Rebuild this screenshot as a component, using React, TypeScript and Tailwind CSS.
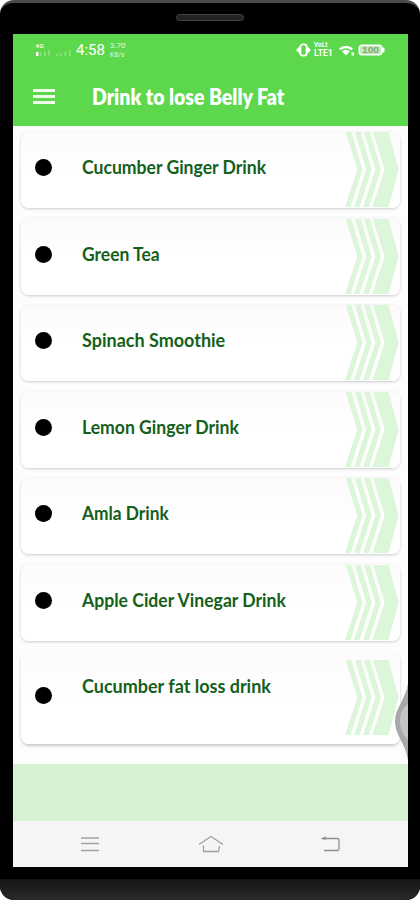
import React from 'react';

type Drink = {
  id: string;
  title: string;
  // width the title is condensed to, keeps the narrow look
  fit: string;
  tall?: boolean;
};

const drinks: Drink[] = [
  { id: 'cucumber-ginger', title: 'Cucumber Ginger Drink', fit: 'w-[184px]' },
  { id: 'green-tea', title: 'Green Tea', fit: 'w-[78px]' },
  { id: 'spinach', title: 'Spinach Smoothie', fit: 'w-[143px]' },
  { id: 'lemon-ginger', title: 'Lemon Ginger Drink', fit: 'w-[157px]' },
  { id: 'amla', title: 'Amla Drink', fit: 'w-[87px]' },
  { id: 'apple-cider', title: 'Apple Cider Vinegar Drink', fit: 'w-[204px]' },
  { id: 'cucumber-fat-loss', title: 'Cucumber fat loss drink', fit: 'w-[189px]', tall: true },
];

// Squeezes a line of text horizontally so that it fills its box
const FitText: React.FC<{ text: string; className: string }> = ({ text, className }) => {
  const box = React.useRef<HTMLSpanElement>(null);
  const inner = React.useRef<HTMLSpanElement>(null);
  const [scale, setScale] = React.useState(1);

  React.useLayoutEffect(() => {
    if (box.current && inner.current) {
      setScale(box.current.offsetWidth / inner.current.offsetWidth);
    }
  }, [text]);

  return (
    <span ref={box} className={`block whitespace-nowrap ${className}`}>
      <span ref={inner} className="inline-block origin-left" style={{ transform: `scaleX(${scale})` }}>
        {text}
      </span>
    </span>
  );
};

const Chevrons = () => (
  <svg viewBox="0 0 55 75" className="h-[75px] w-[55px] shrink-0" fill="#dcf6da">
    <path d="M.7 0H6.3L17.6 37.5L5.7 75H0L12.3 37.5Z" />
    <path d="M10 0H15.7L26.8 37.5L14.7 75H9L21.2 37.5Z" />
    <path d="M19 0H25L36 37.5L24 75H18L30.4 37.5Z" />
    <path d="M28 0H43.5L53.7 37.5L43.5 75H27.3L39.6 37.5Z" />
  </svg>
);

const StatusBar = () => (
  <div className="flex h-8 items-center pr-[22px] pl-[22px] text-white">
    <svg viewBox="0 0 37 16" className="h-4 w-[37px]" fill="#fff">
      <text x="0.5" y="6.3" fontSize="6" fontWeight="700" fontFamily="Liberation Sans, sans-serif" textLength="8.5">4G</text>
      <rect x="1" y="10" width="2.5" height="4" />
      <g opacity=".3">
        <rect x="5" y="10" width="1.5" height="4" />
        <rect x="9" y="9" width="1.5" height="5" />
        <rect x="13" y="8" width="1.5" height="6" />
        <rect x="21" y="12" width="1.5" height="2" />
        <rect x="25" y="11" width="1.5" height="3" />
        <rect x="29.5" y="9.5" width="1.5" height="4.5" />
        <rect x="34" y="8" width="1.5" height="6" />
      </g>
    </svg>
    <FitText text="4:58" className="ml-[4px] w-[29px] font-[Roboto,sans-serif] text-[15px] leading-4" />
    <div className="ml-[5px] flex flex-col font-[Roboto,sans-serif] text-[8px] leading-[9px] opacity-80">
      <FitText text="3.70" className="w-4" />
      <FitText text="KB/s" className="w-[14px]" />
    </div>
    <svg viewBox="0 0 15 14" className="ml-auto h-[14px] w-[15px] shrink-0" fill="#fff">
      <path d="M0 7L4 3V11ZM15 7L11 3V11Z" />
      <rect x="4.4" y="1.4" width="6.2" height="11.2" rx="2.4" fill="none" stroke="#fff" strokeWidth="1.8" />
    </svg>
    <div className="ml-[3px] flex w-[19px] flex-col font-[Roboto,sans-serif] font-bold">
      <div className="text-[6.5px] leading-[7px]">
        <FitText text="VoLt" className="w-[14px]" />
      </div>
      <div className="text-[9px] leading-[9px]">
        <FitText text="LTE1" className="w-[19px]" />
      </div>
    </div>
    <svg viewBox="42 0 48 18" className="ml-[5px] h-[18px] w-12 shrink-0" fill="#fff">
      <path d="M43 7.5Q50 2 57 7.5L55.3 9.2Q50 5.2 44.7 9.2ZM46 10.2Q50 7.2 54 10.2L50 14.5Z" />
      <path d="M55.5 11h1v1.5h.8V11H58v3.5h-2.5Z" />
      <rect x="62.5" y="3.5" width="24" height="11" rx="3.5" />
      <rect x="86" y="6.5" width="2.5" height="5" rx="1" />
      <rect x="64" y="5" width="21" height="8" rx="2.2" fill="#c3e6bc" />
      <text x="66" y="12.1" fontSize="8.5" fontWeight="700" fontFamily="Liberation Sans, sans-serif" textLength="17" lengthAdjust="spacingAndGlyphs" fill="#78ac70">100</text>
    </svg>
  </div>
);

const AppBar = () => (
  <div className="flex flex-1 items-center pl-5">
    <div className="flex w-[22px] flex-col gap-[3px]">
      <div className="h-[3px] bg-[#edfbea]" />
      <div className="h-[3px] bg-[#edfbea]" />
      <div className="h-[3px] bg-[#edfbea]" />
    </div>
    <h1 className="ml-[37px] pt-px text-[22px] leading-7 font-extrabold text-white">
      <FitText text="Drink to lose Belly Fat" className="w-[192px]" />
    </h1>
  </div>
);

const DrinkCard: React.FC<{ drink: Drink }> = ({ drink }) => (
  <div
    className={`flex shrink-0 items-center overflow-hidden rounded-lg bg-linear-to-b from-[#fdfafb] to-white to-50% pl-[14px] ${
      drink.tall ? 'h-[93.5px] shadow-[0_2px_3px_rgba(0,0,0,0.2)]' : 'h-[76.5px] shadow-[0_1px_3px_rgba(0,0,0,0.2)]'
    }`}
  >
    <div className="mb-1 size-[17px] rounded-full bg-black" />
    <div className="ml-[30px] self-start pt-[22.5px] text-[19.5px] leading-[26px] font-bold text-[#14601b]">
      <FitText text={drink.title} className={drink.fit} />
    </div>
    <div className="ml-auto">
      <Chevrons />
    </div>
  </div>
);

const NavBar = () => (
  <div className="flex h-[46px] shrink-0 items-center bg-[#f5f5f5] pl-[68px]">
    <svg viewBox="0 0 18 16" className="h-4 w-[18px]" stroke="#a3a3a3" strokeWidth="1.5">
      <path d="M0 2H18M0 7.5H18M0 14.5H18" />
    </svg>
    <svg viewBox="0 0 26 18" className="ml-[99px] h-[18px] w-[26px]" fill="none" stroke="#a0a0a0" strokeWidth="1.3">
      <path d="M1 9.5L13 1.5L25 9.5M5.5 10.5V16.5H20.5L21.5 11" />
    </svg>
    <svg viewBox="0 0 20 18" className="ml-[97px] h-[18px] w-5" fill="none" stroke="#8e8e8e" strokeWidth="1.3">
      <path d="M1 3.5H16.5Q18 3.5 18 5V14Q18 15.5 16.5 15.5H3M5 2L1.5 3.5L4.5 4.5" />
    </svg>
  </div>
);

export default function App() {
  return (
    <div className="h-[900px] w-[420px] bg-white font-[Lato,'Open_Sans',sans-serif]">
      <div className="flex h-full flex-col overflow-hidden rounded-[14px] border-t-[3px] border-[#4b4b4b] bg-black">
        <div className="flex h-[31px] shrink-0 justify-center pt-[11px]">
          <div className="h-[7px] w-[68px] rounded-full border border-[#444] bg-[#222]" />
        </div>

        <div className="relative ml-[13px] flex h-[833px] w-[395px] shrink-0 flex-col overflow-hidden bg-white">
          <header className="flex h-[92px] shrink-0 flex-col bg-[#5dd84c]">
            <StatusBar />
            <AppBar />
          </header>

          <main className="flex h-[638px] shrink-0 flex-col gap-[10px] overflow-hidden bg-[#fefdfd] px-2 pt-[5.5px]">
            {drinks.map((drink) => (
              <DrinkCard key={drink.id} drink={drink} />
            ))}
          </main>

          <div className="h-[57px] shrink-0 bg-[#d5f1d2]" />
          <NavBar />

          {/* edge handle floating over the list */}
          <svg viewBox="0 0 14 78" className="absolute top-[649px] right-0 h-[78px] w-[14px]">
            <path d="M14 0C12 16 1 25 1 38C1 53 12 60 14 78Z" fill="#a8a8a8" />
            <path d="M14 21C8 25 6 32 6 38C6 46 9 52 14 57Z" fill="#c4c4c4" />
          </svg>
        </div>

        <div className="mt-3 flex-1 bg-linear-to-b from-[#151515] to-[#292929]" />
      </div>
    </div>
  );
}
